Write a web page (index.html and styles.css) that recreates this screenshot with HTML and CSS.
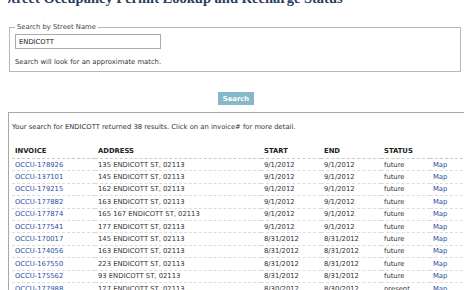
FILE: index.html
```html
<!DOCTYPE html>
<html lang="en">
<head>
    <meta charset="UTF-8">
    <title>Street Occupancy Permit Lookup</title>
    <link rel="stylesheet" href="styles.css">
</head>
<body>
    <h1 class="page-title">Street Occupancy Permit Lookup and Recharge Status</h1>

    <form class="search-form">
        <fieldset>
            <legend>Search by Street Name</legend>
            <input type="text" value="ENDICOTT">
            <p class="hint">Search will look for an approximate match.</p>
        </fieldset>
        <div class="button-row">
            <button type="submit">Search</button>
        </div>
    </form>

    <div class="results">
        <p class="summary">Your search for ENDICOTT returned 38 results. Click on an invoice# for more detail.</p>
        <table>
            <colgroup>
                <col class="col-invoice">
                <col class="col-address">
                <col class="col-start">
                <col class="col-end">
                <col class="col-status">
                <col class="col-map">
            </colgroup>
            <thead>
                <tr>
                    <th>INVOICE</th>
                    <th>ADDRESS</th>
                    <th>START</th>
                    <th>END</th>
                    <th>STATUS</th>
                    <th></th>
                </tr>
            </thead>
            <tbody>
                <tr><td><a href="#">OCCU-178926</a></td><td>135 ENDICOTT ST, 02113</td><td>9/1/2012</td><td>9/1/2012</td><td>future</td><td><a href="#">Map</a></td></tr>
                <tr><td><a href="#">OCCU-137101</a></td><td>145 ENDICOTT ST, 02113</td><td>9/1/2012</td><td>9/1/2012</td><td>future</td><td><a href="#">Map</a></td></tr>
                <tr><td><a href="#">OCCU-179215</a></td><td>162 ENDICOTT ST, 02113</td><td>9/1/2012</td><td>9/1/2012</td><td>future</td><td><a href="#">Map</a></td></tr>
                <tr><td><a href="#">OCCU-177882</a></td><td>163 ENDICOTT ST, 02113</td><td>9/1/2012</td><td>9/1/2012</td><td>future</td><td><a href="#">Map</a></td></tr>
                <tr><td><a href="#">OCCU-177874</a></td><td>165 167 ENDICOTT ST, 02113</td><td>9/1/2012</td><td>9/1/2012</td><td>future</td><td><a href="#">Map</a></td></tr>
                <tr><td><a href="#">OCCU-177541</a></td><td>177 ENDICOTT ST, 02113</td><td>9/1/2012</td><td>9/1/2012</td><td>future</td><td><a href="#">Map</a></td></tr>
                <tr><td><a href="#">OCCU-170017</a></td><td>145 ENDICOTT ST, 02113</td><td>8/31/2012</td><td>8/31/2012</td><td>future</td><td><a href="#">Map</a></td></tr>
                <tr><td><a href="#">OCCU-174056</a></td><td>163 ENDICOTT ST, 02113</td><td>8/31/2012</td><td>8/31/2012</td><td>future</td><td><a href="#">Map</a></td></tr>
                <tr><td><a href="#">OCCU-167550</a></td><td>223 ENDICOTT ST, 02113</td><td>8/31/2012</td><td>8/31/2012</td><td>future</td><td><a href="#">Map</a></td></tr>
                <tr><td><a href="#">OCCU-175562</a></td><td>93 ENDICOTT ST, 02113</td><td>8/31/2012</td><td>8/31/2012</td><td>future</td><td><a href="#">Map</a></td></tr>
                <tr><td><a href="#">OCCU-177988</a></td><td>127 ENDICOTT ST, 02113</td><td>8/30/2012</td><td>8/30/2012</td><td>present</td><td><a href="#">Map</a></td></tr>
            </tbody>
        </table>
    </div>
</body>
</html>
```

FILE: styles.css
```css
body {
    font-family: "DejaVu Sans", Verdana, sans-serif;
    font-size: 6.8px;
    color: #333;
    margin: 0 0 0 8px;
    overflow: hidden;
}

.page-title {
    font-family: "Liberation Serif", serif;
    font-size: 14.5px;
    color: #2b3d5c;
    margin: -10px 0 0 -5px;
    line-height: 16px;
    white-space: nowrap;
}

.search-form {
    margin-top: 17px;
}

fieldset {
    margin: 0 3px 0 1px;
    padding: 2px 5px 5px 5px;
    border: 1px solid #b8b8b8;
}

legend {
    padding: 0 2px;
    color: #444;
}

input[type="text"] {
    width: 146px;
    height: 15px;
    box-sizing: border-box;
    border: 1px solid #aaa;
    font-family: inherit;
    font-size: 6.8px;
    padding: 0 3px;
    color: #222;
    margin-top: 1px;
}

.hint {
    margin: 9px 0 0 0;
}

.button-row {
    text-align: center;
    margin-top: 20px;
}

button {
    background-color: #86b8cb;
    color: white;
    font-family: inherit;
    font-size: 6.8px;
    font-weight: bold;
    border: none;
    padding: 2px 5px;
    height: 13px;
}

.results {
    margin-top: 7px;
    width: 470px;
    border-top: 1px solid #a8a8a8;
    border-left: 1px solid #a8a8a8;
    padding: 0 3px;
}

.summary {
    margin: 10px 0 16px 0;
}

table {
    border-collapse: collapse;
    table-layout: fixed;
    width: 456px;
}

.col-invoice { width: 83px; }
.col-address { width: 166px; }
.col-start { width: 60px; }
.col-end { width: 60px; }
.col-status { width: 49px; }
.col-map { width: 38px; }

th {
    text-align: left;
    font-weight: bold;
    color: #222;
    padding: 0 3px 3px 3px;
    border-bottom: 1px dashed #ccc;
}

td {
    padding: 0 3px;
    height: 11.4px;
    border-bottom: 1px dashed #ddd;
    white-space: nowrap;
}

a {
    color: #2b4fa3;
    text-decoration: none;
}
```
